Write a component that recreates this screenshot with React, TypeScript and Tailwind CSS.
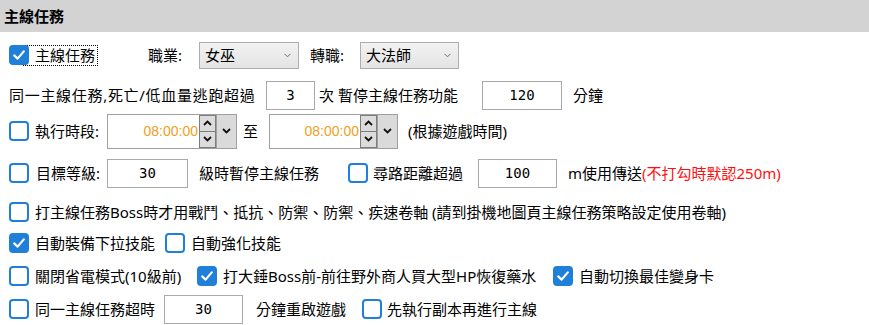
import { FC } from "react"

const Box: FC<{ checked?: boolean }> = ({ checked }) => {
  if (checked) {
    return (
      <span className="relative z-10 w-[20px] h-[20px] rounded-[4px] bg-[#1f7fd9] flex items-center justify-center shrink-0">
        <svg width="14" height="14" viewBox="0 0 14 14">
          <path d="M2.2 7.4 L5.6 10.6 L11.8 3.4" stroke="white" strokeWidth="2.2" fill="none" strokeLinecap="round" strokeLinejoin="round" />
        </svg>
      </span>
    )
  }
  return <span className="w-[20px] h-[20px] rounded-[4px] border-2 border-[#1f7fd9] bg-white shrink-0" />
}

const Num: FC<{ w: string; v: string }> = ({ w, v }) => (
  <div className={`${w} h-[29px] border border-[#a9a9a9] bg-white flex items-center justify-center font-['DejaVu_Sans_Mono',monospace] text-[14px] text-black shrink-0`}>
    {v}
  </div>
)

const Select: FC<{ w: string; v: string }> = ({ w, v }) => (
  <div className={`${w} h-[27px] border border-[#adadad] bg-gradient-to-b from-[#f2f2f2] to-[#e4e4e4] flex items-center justify-between pl-[5px] pr-[7px] shrink-0`}>
    <span>{v}</span>
    <svg width="7" height="5" viewBox="0 0 7 5">
      <polyline points="0.5,0.8 3.5,3.8 6.5,0.8" stroke="#6b6b6b" strokeWidth="1" fill="none" />
    </svg>
  </div>
)

const TimePick: FC<{ w: string }> = ({ w }) => (
  <div className={`${w} h-[35px] border border-[#a0a0a0] bg-white flex shrink-0`}>
    <div className="flex-1 flex items-center justify-end pr-[1px] font-['Liberation_Sans',sans-serif] text-[14px] text-[#f0a023]">
      08:00:00
    </div>
    <div className="w-[17px] flex flex-col border border-[#7d7d7d] bg-[#dcdcdc]">
      <div className="flex-1 flex items-center justify-center border-b border-[#7d7d7d]">
        <svg width="9" height="6" viewBox="0 0 9 6">
          <polyline points="1,5 4.5,1.5 8,5" stroke="#111" strokeWidth="1.8" fill="none" />
        </svg>
      </div>
      <div className="flex-1 flex items-center justify-center">
        <svg width="9" height="6" viewBox="0 0 9 6">
          <polyline points="1,1 4.5,4.5 8,1" stroke="#111" strokeWidth="1.8" fill="none" />
        </svg>
      </div>
    </div>
    <div className="w-[20px] flex items-center justify-center bg-[#dadada] border-l border-[#a0a0a0]">
      <svg width="9" height="6" viewBox="0 0 9 6">
        <polyline points="1,1 4.5,4.5 8,1" stroke="#111" strokeWidth="1.8" fill="none" />
      </svg>
    </div>
  </div>
)

const App: FC = () => {
  return (
    <div className="w-[869px] h-[325px] bg-white overflow-hidden font-['Noto_Sans','Noto_Sans_CJK_TC',sans-serif] text-[15px] leading-[20px] text-black">
      <div className="h-[32px] bg-[#d3d3d3] flex items-center pl-[4px] font-semibold">主線任務</div>

      <div className="h-[46px] flex items-center pl-[9px]">
        <Box checked />
        <span className="ml-[-6px] h-[21px] pl-[11px] pr-[2px] border border-dotted border-black flex items-center">主線任務</span>
        <span className="ml-[50px] w-[51px]">職業:</span>
        <Select w="w-[100px]" v="女巫" />
        <span className="ml-[11px] w-[50px]">轉職:</span>
        <Select w="w-[99px]" v="大法師" />
      </div>

      <div className="h-[34px] flex items-center pl-[9px]">
        <span className="w-[257px] tracking-[0.7px]">同一主線任務,死亡/低血量逃跑超過</span>
        <Num w="w-[49px]" v="3" />
        <span className="ml-[4px] w-[163px]">次 暫停主線任務功能</span>
        <Num w="w-[80px]" v="120" />
        <span className="ml-[11px]">分鐘</span>
      </div>

      <div className="h-[38px] flex items-center pl-[9px]">
        <Box />
        <span className="ml-[6px] w-[72px]">執行時段:</span>
        <TimePick w="w-[130px]" />
        <span className="ml-[6px] w-[26px]">至</span>
        <TimePick w="w-[129px]" />
        <span className="ml-[10px]">(根據遊戲時間)</span>
      </div>

      <div className="h-[46px] flex items-center pl-[9px]">
        <Box />
        <span className="ml-[7px] w-[71px]">目標等級:</span>
        <Num w="w-[81px]" v="30" />
        <span className="ml-[11px] w-[149px]">級時暫停主線任務</span>
        <Box />
        <span className="ml-[5px] w-[105px]">尋路距離超過</span>
        <Num w="w-[79px]" v="100" />
        <span className="ml-[11px]">
          m使用傳送<span className="text-[#ff1010]">(不打勾時默認250m)</span>
        </span>
      </div>

      <div className="h-[32px] flex items-center pl-[9px]">
        <Box />
        <span className="ml-[6px]">打主線任務Boss時才用戰鬥、抵抗、防禦、防禦、疾速卷軸 (請到掛機地圖頁主線任務策略設定使用卷軸)</span>
      </div>

      <div className="h-[30px] flex items-center pl-[9px]">
        <Box checked />
        <span className="ml-[6px] w-[130px]">自動裝備下拉技能</span>
        <Box />
        <span className="ml-[6px]">自動強化技能</span>
      </div>

      <div className="h-[36px] flex items-center pl-[9px]">
        <Box />
        <span className="ml-[6px] w-[162px]">關閉省電模式(10級前)</span>
        <Box checked />
        <span className="ml-[6px] w-[330px]">打大錘Boss前-前往野外商人買大型HP恢復藥水</span>
        <Box checked />
        <span className="ml-[6px]">自動切換最佳變身卡</span>
      </div>

      <div className="h-[30px] flex items-center pl-[9px]">
        <Box />
        <span className="ml-[6px] w-[129px]">同一主線任務超時</span>
        <Num w="w-[79px]" v="30" />
        <span className="ml-[13px] w-[106px]">分鐘重啟遊戲</span>
        <Box />
        <span className="ml-[5px]">先執行副本再進行主線</span>
      </div>
    </div>
  )
}

export default App
